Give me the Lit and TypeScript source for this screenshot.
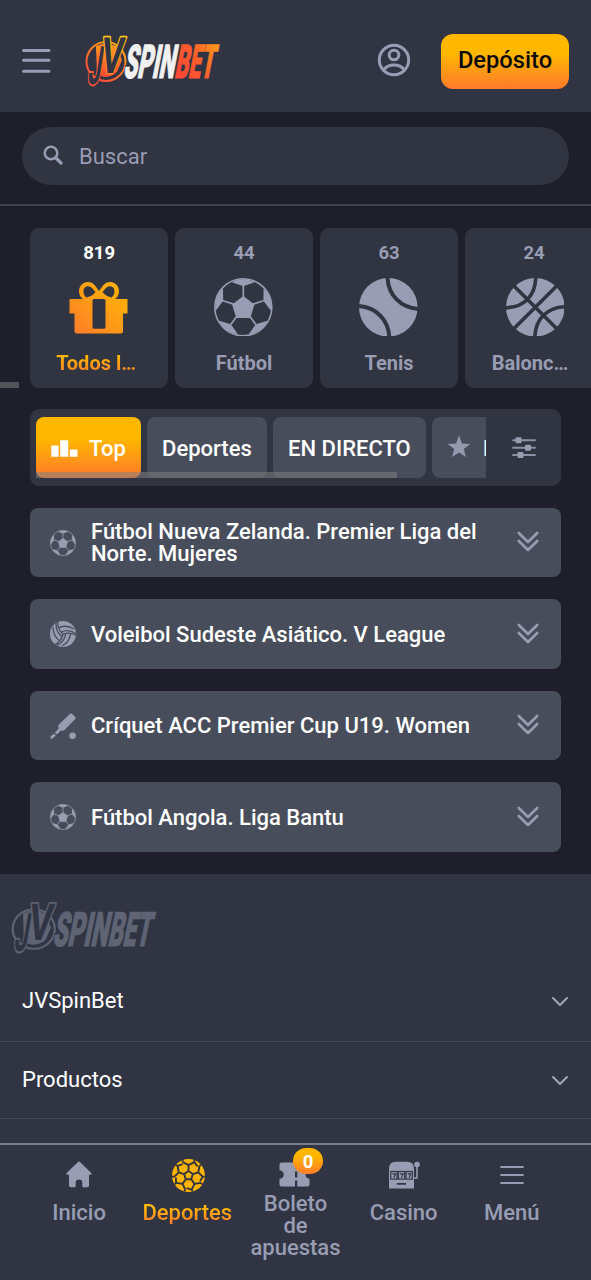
import { LitElement, html, css, svg, nothing } from "lit";
import { customElement } from "lit/decorators.js";
import { classMap } from "lit/directives/class-map.js";

const spin = [0, 72, 144, 216, 288];

const soccer = (size: number) => html`<svg width=${size} height=${size} viewBox="0 0 58.6 58.6" fill="currentColor">
  <circle cx="29.3" cy="29.3" r="28.5" fill="none" stroke="currentColor" stroke-width="1.6" />
  <path d="M29.3 17.9 40.5 26.4 36.3 40H22.3L18.1 26.4Z" />
  ${spin.map(a => svg`<g transform="rotate(${a} 29.3 29.3)">
    <path d="M29.3 8.2 17.8 4.2C24 .2 34.6 .2 40.8 4.2Z" />
    <path d="M29.3 8V19" stroke="currentColor" stroke-width="1.7" />
  </g>`)}
</svg>`;

const gift = html`<svg width="60" height="54" viewBox="0 0 60 54">
  <defs><linearGradient id="gg" x1="0" y1="1" x2="1" y2="0"><stop offset="0" stop-color="#ff7a2c" /><stop offset=".65" stop-color="#ffa50f" /><stop offset="1" stop-color="#ffb405" /></linearGradient></defs>
  <path fill="url(#gg)" fill-rule="evenodd" d="M1.500 19H14C9.500 16 9 10 11.500 6 15 1 22 .8 26 5.500L30 11 34 5.500C38 .8 45 1 48.500 6 51 10 50.500 16 46 19H58.500V33.500H54V51Q54 53.500 51.500 53.500H8Q5.500 53.500 5.500 51V33.500H.500V20Q.500 19 1.500 19ZM17.500 17.500C22 16.500 25 14 26.500 12L23.500 8.500C19.500 4 14 6.500 14.500 12 14.700 14.500 16 16.500 17.500 17.500ZM42.500 17.500C38 16.500 35 14 33.500 12L36.500 8.500C40.500 4 46 6.500 45.500 12 45.300 14.500 44 16.500 42.500 17.500ZM25 19Q23.500 19 23.500 20.500V47.500Q23.500 48.700 25 48.700H35Q36.500 48.700 36.500 47.500V20.500Q36.500 19 35 19Z" />
</svg>`;

const tennis = html`<svg width="58.6" height="58.6" viewBox="0 0 58.6 58.6">
  <circle cx="29.3" cy="29.3" r="29.3" fill="currentColor" />
  <g fill="none" stroke="#313441" stroke-width="4"><path d="M28.500 -2C28.500 17 42 30.500 61 31" /><path d="M-2 28C17 28.500 30.300 42 30.300 61" /></g>
</svg>`;

const basket = html`<svg width="58.6" height="58.6" viewBox="0 0 58.6 58.6">
  <circle cx="29.3" cy="29.3" r="29.3" fill="currentColor" />
  <g fill="none" stroke="#313441" stroke-width="3.6">
    <path d="M29.800 -2C29.800 18 18 29.800 -2 29.800M28.800 61C28.800 41 41 28.700 61 28.700M7 7 51.600 51.600M51.600 7 7 51.600" />
  </g>
</svg>`;

const volley = html`<svg width="26" height="26" viewBox="0 0 26 26">
  <defs><clipPath id="vc"><circle cx="13" cy="13" r="13" /></clipPath></defs>
  <circle cx="13" cy="13" r="13" fill="currentColor" />
  <g fill="none" stroke="#484d5b" stroke-width="1.3" clip-path="url(#vc)">
    ${[0, 120, 240].map(a => svg`<path transform="rotate(${a} 13 13)" d="M13 13C9 9.500 7.300 5 7.800 0M8.800 6.600C14 4.500 19.500 5 24 8M11 11C15.500 8.800 21 9.300 26 12.500" />`)}
  </g>
</svg>`;

const cricket = html`<svg width="26" height="26" viewBox="0 0 26 26" fill="currentColor">
  <path d="M20 .8Q21 0 22 .8L25.300 4.200Q26 5 25.300 6L14.500 17Q13.500 18 12.300 17.700L10.800 17.400 6.800 21.400 4.900 19.500 8.700 15.500 8.200 13.500Q8 12.500 8.800 11.700ZM3.900 20.500 5.900 22.500 3 25.300Q1.800 26.200.700 25.200-.200 24.200.700 23.200Z" />
  <circle cx="22.600" cy="22.700" r="3.300" />
</svg>`;

const star = html`<svg width="24" height="23" viewBox="0 0 24 23"><path fill="#9499ae" d="M12 .5 15 8.500 23.300 8.900 16.800 14 19 22 12 17.500 5 22 7.200 14 .700 8.900 9 8.500Z" /></svg>`;

const podium = html`<svg width="27" height="17" viewBox="0 0 27 17" fill="#fff"><path d="M.300 5.500h7.300v11.200H.300ZM9.200.200h8v16.500h-8ZM18.800 9.500h7.700v7.200h-7.700Z" /></svg>`;

const sliders = html`<svg width="24" height="22" viewBox="0 0 24 22"><path d="M1 3.300H23M1 10.700H23M1 18H23" stroke="#8b90a5" stroke-width="1.9" stroke-linecap="round" /><g fill="#989db1"><rect x="3.5" y=".3" width="6" height="6" rx="1" /><rect x="13" y="7.7" width="6" height="6" rx="1" /><rect x="5.5" y="15" width="6" height="6" rx="1" /></g></svg>`;

const doubleChevron = html`<svg class="dbl" width="22" height="21" viewBox="0 0 22 21" fill="none" stroke="currentColor" stroke-width="2.6" stroke-linecap="round" stroke-linejoin="round"><path d="M1.800 2 11 11 20.200 2M1.800 10 11 19 20.200 10" /></svg>`;

const chevron = html`<svg class="chev" width="18" height="11" viewBox="0 0 18 11" fill="none" stroke="#a0a5b8" stroke-width="2" stroke-linecap="round" stroke-linejoin="round"><path d="M2 2 9 9 16 2" /></svg>`;

const home = html`<svg width="26" height="27" viewBox="0 0 26 27"><path fill="currentColor" d="M12 1Q13 0 14 1L25.300 12Q26.200 13.700 24.500 13.800H23V24.500Q23 26.300 21.200 26.300H17.500Q16.300 26.300 16.300 25V21.200Q16.300 18.600 13 18.600T9.700 21.200V25Q9.700 26.300 8.500 26.300H4.800Q3 26.300 3 24.500V13.800H1.500Q-.200 13.700.700 12Z" /></svg>`;

const sportsBall = html`<svg width="33" height="33" viewBox="0 0 33 33">
  <defs><clipPath id="bc"><circle cx="16.5" cy="16.5" r="16.5" /></clipPath></defs>
  <circle cx="16.5" cy="16.5" r="16.5" fill="#ffb400" />
  <g fill="none" stroke="#313543" stroke-width="1.9" clip-path="url(#bc)">
    ${spin.map(a => svg`<path transform="rotate(${a} 16.5 16.5)" d="M16.500 11.900 20.880 15.080M16.500 11.900V6.200M10.800 3.200 16.500 6.200 22.200 3.200M22.200 3.200 22.800 -1M10.800 3.200 10.200 -1M22.200 3.200 25.500 7.400" />`)}
  </g>
</svg>`;

const ticket = html`<svg width="31" height="25" viewBox="0 0 31 25"><path fill="currentColor" fill-rule="evenodd" d="M2.500.500H28.500Q30.500.500 30.500 2.500V8Q26.500 9 26.500 12.500T30.500 17V22.500Q30.500 24.500 28.500 24.500H2.500Q.500 24.500.500 22.500V17Q4.800 16 4.800 12.500T.500 8V2.500Q.500.500 2.500.500ZM16 3V6.500H18.300V3ZM16 9.500V15.500H18.300V9.500ZM16 18.500V24.500H18.300V18.500Z" /></svg>`;

const slots = html`<svg width="32" height="28" viewBox="0 0 32 28">
  <path fill="currentColor" d="M1 27V8Q1 .800 8 .800H19Q26 .800 26 8V27Q26 27.500 25.500 27.500H1.500Q1 27.500 1 27Z" />
  <circle cx="29" cy="3.5" r="2.8" fill="currentColor" /><path d="M29 5V17H25" fill="none" stroke="currentColor" stroke-width="1.6" />
  <g fill="none" stroke="#313543" stroke-width="1.2">${[2.8, 10.4, 18].map(x => svg`<rect x=${x} y="10.5" width="6.3" height="7.6" /><path d="M${x + 1.6} 12.900H${x + 4.600}L${x + 3.1} 16.800" />`)}<path d="M9.500 22.800H17.500" stroke-width="1.7" stroke-linecap="round" /></g>
</svg>`;

const menuIcon = html`<svg width="24" height="20" viewBox="0 0 24 20" stroke="currentColor" stroke-width="2.2" stroke-linecap="round"><path d="M1.200 2H22.800M1.200 10H22.800M1.200 18H22.800" /></svg>`;

@customElement("brand-logo")
class BrandLogo extends LitElement {
  static properties = { muted: { type: Boolean } };
  declare muted: boolean;
  static styles = css`
    :host { display: block; }
    svg { display: block; width: 100%; height: 100%; overflow: visible; }
    text { font-family: Roboto, sans-serif; font-weight: 900; }
    .mono text { font-weight: 700; }
  `;
  render() {
    const m = this.muted;
    const edge = m ? "#5f6475" : "url(#fire)";
    const rim = (hot: string) => (m ? "#5f6475" : hot);
    const ink = "#313543";
    const white = m ? "#5f6475" : "#f1f1f1";
    const bet = m ? "#5f6475" : "url(#bet)";
    return html`<svg viewBox="0 0 138 56" preserveAspectRatio="none">
      <defs>
        <linearGradient id="fire" gradientUnits="userSpaceOnUse" x1="8" y1="52" x2="40" y2="2"><stop offset="0" stop-color="#ff3b3b" /><stop offset=".55" stop-color="#ff7d25" /><stop offset="1" stop-color="#ffc414" /></linearGradient>
        <linearGradient id="core" x1="0" y1="0" x2="0" y2="1"><stop offset="0" stop-color="#ff9a1c" /><stop offset="1" stop-color="#ff4a35" /></linearGradient>
        <linearGradient id="rimJ" x1="0" y1="0" x2="0" y2="1"><stop offset="0" stop-color="#ff8a20" /><stop offset="1" stop-color="#ff4040" /></linearGradient>
        <linearGradient id="rimV" x1="0" y1="0" x2="0" y2="1"><stop offset=".2" stop-color="#ffc414" /><stop offset=".9" stop-color="#ff6a2a" /></linearGradient>
        <linearGradient id="bet" x1="0" y1="1" x2="1" y2="0"><stop offset="0" stop-color="#ff3f3c" /><stop offset=".5" stop-color="#ff5b2d" /><stop offset="1" stop-color="#ffac13" /></linearGradient>
      </defs>
      <circle cx="22" cy="27.5" r="19.5" fill="none" stroke=${edge} stroke-width="2" />
      <path d="M12 12Q22 8 32 12L38 26 33 38Q28 43 20 43L13 40Z" fill=${m ? edge : "url(#core)"} />
      <g class="mono" fill=${ink} paint-order="stroke" stroke-linejoin="round">
        <text transform="translate(3 49.5) skewX(-9) scale(.43 1)" font-size="53" stroke=${rim("url(#rimJ)")} stroke-width="4">J</text>
        <text transform="translate(15 38.5) skewX(-8) scale(.68 1)" font-size="50" stroke=${rim("url(#rimV)")} stroke-width="3.4">V</text>
      </g>
      <g font-size="46.5" stroke-width="1.2" transform="translate(0 44.2)">
        <text transform="translate(38.8 0) skewX(-11)" textLength="51" lengthAdjust="spacingAndGlyphs" fill=${ink} stroke=${ink} stroke-width="4">SPIN</text>
        <text transform="translate(38.8 0) skewX(-11)" textLength="51" lengthAdjust="spacingAndGlyphs" fill=${white} stroke=${white}>SPIN</text>
        <text transform="translate(90 0) skewX(-11)" textLength="39" lengthAdjust="spacingAndGlyphs" fill=${bet} stroke=${bet}>BET</text>
      </g>
    </svg>`;
  }
}

@customElement("app-root")
class AppRoot extends LitElement {
  sports = [
    { n: "819", label: "Todos l…", icon: gift, on: true, cut: true },
    { n: "44", label: "Fútbol", icon: soccer(58.6) },
    { n: "63", label: "Tenis", icon: tennis },
    { n: "24", label: "Balonc…", icon: basket, cut: true, last: true },
  ];
  leagues = [
    { icon: soccer(26), name: "Fútbol Nueva Zelanda. Premier Liga del Norte. Mujeres" },
    { icon: volley, name: "Voleibol Sudeste Asiático. V League" },
    { icon: cricket, name: "Críquet ACC Premier Cup U19. Women" },
    { icon: soccer(26), name: "Fútbol Angola. Liga Bantu" },
  ];
  nav = [
    { icon: home, label: "Inicio" },
    { icon: sportsBall, label: "Deportes", on: true },
    { icon: ticket, label: "Boleto de apuestas", badge: "0" },
    { icon: slots, label: "Casino" },
    { icon: menuIcon, label: "Menú" },
  ];

  static styles = css`
    :host { display: flex; flex-direction: column; height: 1280px; overflow: hidden; box-sizing: border-box; background: #1e1f2a; color: #fff; font-family: Roboto, sans-serif; font-size: 22px; }
    * { box-sizing: border-box; }
    svg { display: block; flex: none; }
    header { flex: none; height: 112px; background: #313543; display: flex; align-items: center; padding: 9px 22px 0; }
    .burger { display: flex; margin-top: 1px; color: #989db3; }
    .logo { width: 138px; height: 56px; margin: 3px 0 0 33px; }
    .user { margin: -1px 31px 0 auto; color: #989db3; }
    .deposit { width: 128px; height: 55px; margin-top: 1px; border-radius: 12px; display: grid; place-items: center; background: linear-gradient(#ffb700 35%, #ff7a2c); color: #0c0a08; font-size: 23.7px; font-weight: 500; padding-bottom: 2px; }
    .search-row { flex: none; height: 94px; padding: 15px 22px 0; border-bottom: 2px solid #3c4150; }
    .search { height: 58px; border-radius: 29px; background: #313441; display: flex; align-items: center; gap: 16px; padding: 1px 21px 0; color: #989db3; }
    .search svg { margin-top: -3px; }
    .sports { flex: none; position: relative; display: flex; gap: 6.2px; padding: 22px 0 0 29.7px; height: 182px; overflow: hidden; }
    .card { flex: none; width: 138.8px; height: 160px; border-radius: 9px; background: #313441; display: grid; grid-template-rows: 50px 58px 52px; justify-items: center; align-items: center; color: #989db3; font-weight: 700; }
    .count { font-size: 18.5px; }
    .card svg { margin-right: 1px; }
    .card.last svg { margin: 0 0 0 2px; }
    .label { font-size: 20px; padding-top: 1px; }
    .cut { margin-right: 6px; }
    .last .cut { margin-right: 8px; }
    .on .count { color: #fff; }
    .grad { background: linear-gradient(#ffb700 25%, #ff7a2c); -webkit-background-clip: text; background-clip: text; color: transparent; }
    .thumb { position: absolute; left: 0; bottom: 0; height: 6px; background: #7f7f7f8c; }
    .sports .thumb { width: 19px; }
    .filters { flex: none; margin: 21px 30px 0; height: 77px; border-radius: 9px; background: #313441; display: flex; align-items: center; padding-left: 6px; }
    .tabs { position: relative; width: 449.5px; height: 61px; display: flex; gap: 6.7px; overflow: hidden; }
    .tabs .thumb { width: 361px; }
    .tab { flex: none; height: 61px; padding: 2px 14.8px 0; border-radius: 8px; background: #484d5b; display: flex; align-items: center; white-space: nowrap; font-weight: 500; gap: 12px; }
    .tab.top { background: linear-gradient(#ffb700 35%, #ff7a2c); gap: 11.2px; }
    .tab svg { margin-top: -1px; }
    .tab:not(.top) svg { margin-top: -4px; }
    .tune { margin-left: 26px; }
    .leagues { flex: none; padding: 22px 30px 0; display: flex; flex-direction: column; gap: 22.3px; }
    .league { height: 69.2px; border-radius: 8px; background: #484d5b; display: flex; align-items: center; padding: 0 22px 0 20px; color: #989db1; }
    .name { flex: 1; margin: 1px 19px 0 15px; color: #fff; font-weight: 500; line-height: 22px; }
    .dbl { margin-top: -2px; }
    footer { flex: none; margin-top: 22px; height: 269px; background: #313543; padding-top: 27px; }
    .foot-logo { width: 149px; height: 57px; margin-left: 10px; }
    .link { display: flex; align-items: center; justify-content: space-between; padding: 0 22px; height: 77.5px; border-bottom: 1.5px solid #414858; }
    .chev { margin-top: 2px; }
    .first { height: 84px; padding-top: 2px; }
    .bottom { flex: none; height: 137px; border-top: 2px solid #787d8e; background: #313543; display: flex; padding: 0 25px; }
    .item { width: 108.2px; display: flex; flex-direction: column; align-items: center; color: #989db3; font-weight: 500; line-height: 22px; text-align: center; padding-top: 12px; }
    .glyph { position: relative; height: 36px; display: grid; place-items: center; }
    .item.on .glyph { left: 1px; top: 1px; }
    .item .text { margin-top: 9.5px; width: 92px; }
    .item.tall .glyph { left: -1px; }
    .item.tall .text { margin-top: 0; }
    .badge { position: absolute; left: 14px; top: -9px; width: 30px; height: 26px; border-radius: 13px; display: grid; place-items: center; background: linear-gradient(#ffb700 30%, #ff7a2c); color: #fff; font-size: 18.5px; font-weight: 700; padding-top: 2px; }
  `;

  render() {
    return html`
      <header>
        <div class="burger"><svg width="29" height="26" viewBox="0 0 29 26" stroke="currentColor" stroke-width="3" stroke-linecap="round"><path d="M1.500 2.500H27M1.500 12.300H27M1.500 23.200H27" /></svg></div>
        <brand-logo class="logo"></brand-logo>
        <svg class="user" width="33" height="34" viewBox="0 0 33 34" fill="none" stroke="currentColor" stroke-width="3"><circle cx="17" cy="17" r="14.7" /><circle cx="17" cy="12" r="4.8" /><path d="M7 26.500C11.500 20.500 22.500 20.500 27 26.500" /></svg>
        <div class="deposit">Depósito</div>
      </header>
      <div class="search-row"><div class="search">
        <svg width="20" height="20" viewBox="0 0 20 20" fill="none" stroke="currentColor"><circle cx="8" cy="8" r="6.3" stroke-width="2.5" /><path d="M12.800 12.800 18 18" stroke-width="3.2" stroke-linecap="round" /></svg>
        <span>Buscar</span></div></div>
      <div class="sports">
        ${this.sports.map(s => html`<div class=${classMap({ card: true, on: !!s.on, last: !!s.last })}><span class="count">${s.n}</span>${s.icon}<span class=${classMap({ label: true, grad: !!s.on, cut: !!s.cut })}>${s.label}</span></div>`)}
        <div class="thumb"></div>
      </div>
      <div class="filters">
        <div class="tabs">
          <div class="tab top">${podium}Top</div><div class="tab">Deportes</div><div class="tab">EN DIRECTO</div><div class="tab">${star}Favoritos</div>
          <div class="thumb"></div>
        </div>
        <div class="tune">${sliders}</div>
      </div>
      <div class="leagues">${this.leagues.map(l => html`<div class="league">${l.icon}<div class="name">${l.name}</div>${doubleChevron}</div>`)}</div>
      <footer>
        <brand-logo class="foot-logo" muted></brand-logo>
        <div class="link first">JVSpinBet ${chevron}</div>
        <div class="link">Productos ${chevron}</div>
      </footer>
      <nav class="bottom">
        ${this.nav.map(n => html`<div class=${classMap({ item: true, on: !!n.on, tall: !!n.badge })}><div class="glyph">${n.icon}${n.badge ? html`<span class="badge">${n.badge}</span>` : nothing}</div><span class=${classMap({ text: true, grad: !!n.on })}>${n.label}</span></div>`)}
      </nav>`;
  }
}
